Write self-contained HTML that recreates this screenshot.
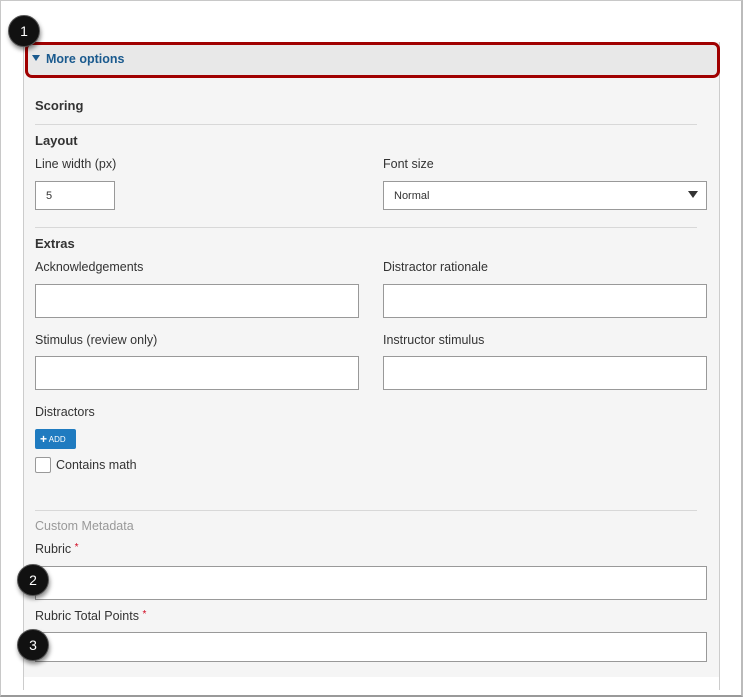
<!DOCTYPE html>
<html><head><meta charset="utf-8"><style>
*{box-sizing:border-box;margin:0;padding:0}
body{width:744px;height:698px;background:#fff;position:relative;overflow:hidden;font-family:"Liberation Sans",Arial,sans-serif;color:#333}
.a{position:absolute}
.frame{left:0;top:0;width:743px;height:697px;border:1px solid #c8c8c8;border-right:2px solid #bbb;border-bottom:2px solid #999}
.panel{left:23px;top:42px;width:697px;height:635px;background:#f5f5f5;border-left:1px solid #ccc;border-right:1px solid #ccc}
.vline{left:23px;top:677px;width:1px;height:13px;background:#ccc}
.vline2{left:719px;top:677px;width:1px;height:13px;background:#ccc}
.hdr{left:25px;top:42px;width:695px;height:36px;background:#e8e8e8;border:3px solid #a00000;border-radius:7px}
.hdr span{position:absolute;left:18px;top:7px;font-size:12.5px;font-weight:bold;color:#1a5a8e}
.tri{left:4px;top:10px;width:0;height:0;border-left:4px solid transparent;border-right:4px solid transparent;border-top:6px solid #1a5a8e}
.h{font-size:13px;font-weight:bold;color:#333}
.l{font-size:12.5px;color:#333}
.sep{left:35px;width:662px;height:1px;background:#d8d8d8}
.in{background:#fff;border:1px solid #999}
.c{width:32px;height:32px;border-radius:50%;background:#111;color:#fff;font-size:14px;text-align:center;line-height:30px;box-shadow:1px 3px 4px rgba(0,0,0,.45);border:1px solid #555}
.req{color:#d0021b;font-size:10px;vertical-align:top}
</style></head><body>
<div class="a frame"></div>
<div class="a panel"></div>
<div class="a vline"></div><div class="a vline2"></div>
<div class="a hdr"><div class="a tri"></div><span>More options</span></div>

<div class="a h" style="left:35px;top:98px">Scoring</div>
<div class="a sep" style="top:124px"></div>
<div class="a h" style="left:35px;top:133px">Layout</div>
<div class="a l" style="left:35px;top:157px">Line width (px)</div>
<div class="a in" style="left:35px;top:181px;width:80px;height:29px"><span class="a l" style="left:10px;top:8px;font-size:11px">5</span></div>
<div class="a l" style="left:383px;top:157px">Font size</div>
<div class="a in" style="left:383px;top:181px;width:324px;height:29px"><span class="a l" style="left:10px;top:8px;font-size:11px">Normal</span><div class="a" style="right:8px;top:9px;border-left:5px solid transparent;border-right:5px solid transparent;border-top:7px solid #333"></div></div>
<div class="a sep" style="top:227px"></div>
<div class="a h" style="left:35px;top:236px">Extras</div>
<div class="a l" style="left:35px;top:260px">Acknowledgements</div>
<div class="a l" style="left:383px;top:260px">Distractor rationale</div>
<div class="a in" style="left:35px;top:284px;width:324px;height:34px"></div>
<div class="a in" style="left:383px;top:284px;width:324px;height:34px"></div>
<div class="a l" style="left:35px;top:333px">Stimulus (review only)</div>
<div class="a l" style="left:383px;top:333px">Instructor stimulus</div>
<div class="a in" style="left:35px;top:356px;width:324px;height:34px"></div>
<div class="a in" style="left:383px;top:356px;width:324px;height:34px"></div>
<div class="a l" style="left:35px;top:405px">Distractors</div>
<div class="a" style="left:35px;top:429px;width:41px;height:20px;background:#1f7bc0;border-radius:2px;color:#fff;font-size:8px;line-height:20px;padding-left:5px"><b style="font-size:12px;vertical-align:-1px">+</b> ADD</div>
<div class="a in" style="left:35px;top:457px;width:16px;height:16px;border-radius:2px"></div>
<div class="a l" style="left:56px;top:458px">Contains math</div>
<div class="a sep" style="top:510px"></div>
<div class="a l" style="left:35px;top:519px;color:#999">Custom Metadata</div>
<div class="a l" style="left:35px;top:542px">Rubric <span class="req">*</span></div>
<div class="a in" style="left:35px;top:566px;width:672px;height:34px"></div>
<div class="a l" style="left:35px;top:609px">Rubric Total Points <span class="req">*</span></div>
<div class="a in" style="left:35px;top:632px;width:672px;height:30px"></div>

<div class="a c" style="left:8px;top:15px">1</div>
<div class="a c" style="left:17px;top:564px">2</div>
<div class="a c" style="left:17px;top:629px">3</div>
</body></html>
